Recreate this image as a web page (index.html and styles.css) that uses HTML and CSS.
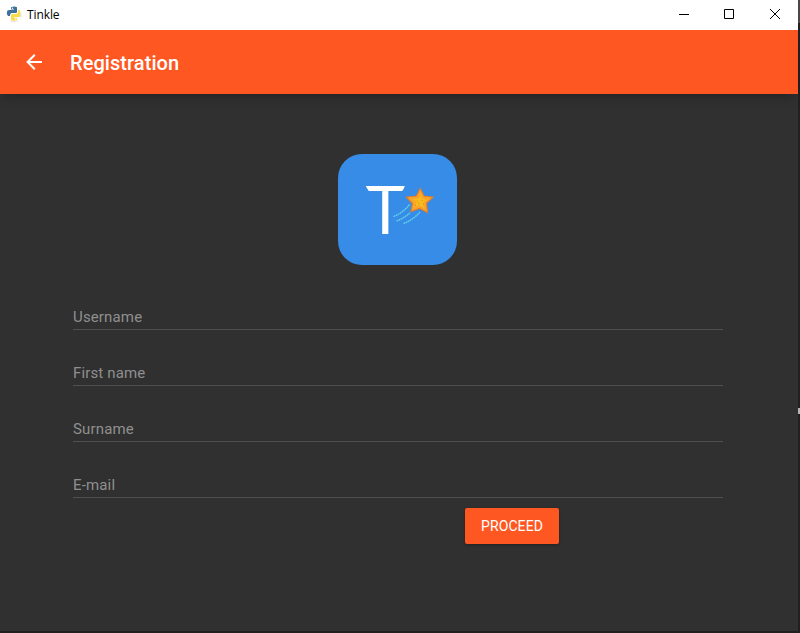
FILE: index.html
```html
<!DOCTYPE html>
<html lang="en">
<head>
<meta charset="utf-8">
<title>Tinkle</title>
<link rel="stylesheet" href="styles.css">
</head>
<body>
<div class="window">
  <header class="titlebar">
    <svg class="app-icon" width="16" height="16" viewBox="0 0 16 16">
      <path d="M5 1.2Q8 0 11 1.2V6Q11 7 10 7H6Q4 7 4 10H2Q.2 8 1 5.5 1.3 4 3 4H8V3.4H5Z" fill="#3d7199"/>
      <path d="M12 4h1.5Q15.5 7 14.3 10.5L13 11H8v.7h3v2.1Q8 15.5 5 14V9.5Q5 8 6.5 8H10Q12 8 12 6Z" fill="#fbdc4c"/>
      <path d="M4 15Q8 16.5 12 14.5M15 12V7" fill="none" stroke="#d9d9d5" stroke-width=".7"/>
      <circle cx="6.5" cy="2.2" r=".7" fill="#fff"/><circle cx="9.6" cy="12.9" r=".7" fill="#fff"/>
    </svg>
    <span class="app-name">Tinkle</span>
    <div class="controls">
      <svg width="10" height="10" viewBox="0 0 10 10"><path d="M0 5.5H10"/></svg>
      <svg width="10" height="10" viewBox="0 0 10 10"><path d="M.5.5H9.5V9.5H.5Z"/></svg>
      <svg class="close" width="10" height="10" viewBox="0 0 10 10"><path d="M0 0L10 10M10 0L0 10"/></svg>
    </div>
  </header>
  <div class="toolbar">
    <svg class="back" width="24" height="24" viewBox="0 0 24 24"><path d="M20 11v2H8l5.5 5.5-1.42 1.42L4.16 12l7.92-7.92L13.5 5.5 8 11Z" fill="#fff"/></svg>
    <h1>Registration</h1>
  </div>
  <main>
    <svg class="logo" width="119" height="111" viewBox="0 0 119 111">
      <rect width="119" height="111" rx="24" fill="#378ce7"/>
      <text class="logo-letter" transform="translate(27.2 80) scale(1.07 1)">T</text>
      <path d="M27 31v8h5zM68 31v8h-5z" fill="#378ce7"/>
      <g fill="none" stroke="#62d8ea" stroke-width="1.3" stroke-dasharray="1.8 .5">
        <path d="M55.5 62.500Q65 59 72 50"/><path d="M58.500 67Q66 64 72 59"/><path d="M65.500 69.500Q75 66 82 58"/>
      </g>
      <path d="M82.200 34.500L86 42 95 43.200 88.500 49 89.500 58.500 81.500 54.500 73 57.500 74.500 49.500 68.500 43.200 78.500 42Z" fill="#fba62a" stroke="#df7e2c" stroke-width="1.200"/>
      <path d="M82 40L84 45 89 45 85 49 86 54 81 51 77 53 78 48 75 45 80 45Z" fill="#f8bb1d"/>
      <path d="M81 42v1M79 47h1M84 46v1M81 49v1M85 50h1M87 45h1M77 51h1" stroke="#dd8c17"/>
    </svg>
    <form class="fields">
      <label class="field">Username</label>
      <label class="field">First name</label>
      <label class="field">Surname</label>
      <label class="field">E-mail</label>
      <button class="proceed" type="button">PROCEED</button>
    </form>
  </main>
</div>
<i class="edge-mark"></i>
</body>
</html>
```
FILE: styles.css
```css
* { box-sizing: border-box; }
body {
  margin: 0;
  width: 800px;
  height: 633px;
  overflow: hidden;
  background: linear-gradient(#484848 23px, #20201e 23px);
  font-family: Roboto, sans-serif;
}
.window {
  width: 798px;
  height: 631px;
  background: #303030;
}
.titlebar {
  height: 30px;
  display: flex;
  align-items: center;
  padding: 0 18px 2px 6px;
  background: #fff;
}
.app-name {
  margin: 0 0 0 5px;
  font: 12px "Open Sans", sans-serif;
  letter-spacing: -.1px;
  color: #000;
}
.controls {
  display: flex;
  gap: 35px;
  margin-left: auto;
}
.controls svg {
  fill: none;
  stroke: #000;
  stroke-width: 1;
}
.controls .close {
  margin-left: 1px;
}
.toolbar {
  height: 64px;
  display: flex;
  align-items: center;
  padding-left: 22px;
  background: #ff5722;
  box-shadow: 0 7px 10px -4px rgba(0, 0, 0, .25);
}
h1 {
  margin: 2px 0 0 24px;
  font-size: 20px;
  font-weight: 500;
  line-height: 24px;
  letter-spacing: .06px;
  color: #fff;
}
main {
  display: flex;
  flex-direction: column;
  padding: 60px 75px 0 73px;
}
.logo {
  margin-left: 265px;
}
.logo-letter {
  font: 68px "Open Sans", sans-serif;
  fill: #fff;
}
.fields {
  display: flex;
  flex-direction: column;
  padding-top: 37px;
}
.field {
  height: 28px;
  margin-bottom: 28px;
  padding-top: 6px;
  border-bottom: 1px solid #505050;
  font-size: 15px;
  line-height: 18px;
  letter-spacing: .15px;
  color: #8f8f8f;
}
.proceed {
  width: 94px;
  height: 36px;
  margin: -18px 0 0 392px;
  padding: 0 0 1px;
  border: 0;
  border-radius: 2px;
  background: #ff5722;
  box-shadow: 0 1px 3px rgba(0, 0, 0, .3);
  font: 14px Roboto, sans-serif;
  letter-spacing: .1px;
  color: #fff;
}
.edge-mark {
  position: absolute;
  left: 798px;
  top: 408px;
  width: 2px;
  height: 6px;
  background: #b5b5b5;
}
```
